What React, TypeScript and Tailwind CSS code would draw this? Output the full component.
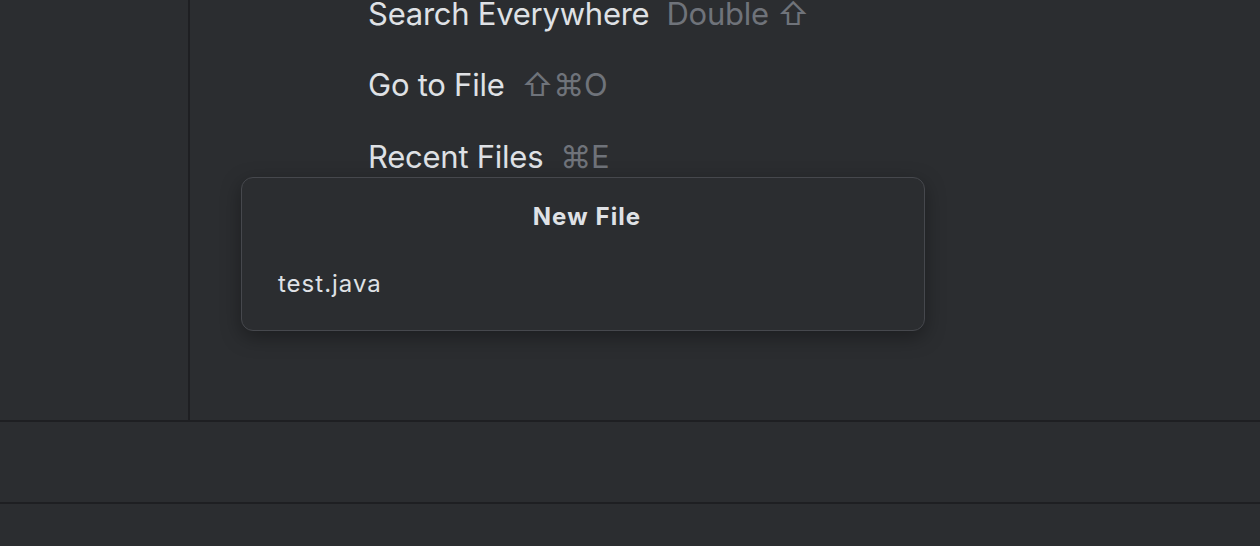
const rows = [
  { label: 'Search Everywhere', keys: 'Double ⇧' },
  { label: 'Go to File', keys: '⇧⌘O' },
  { label: 'Recent Files', keys: '⌘E' },
];

export default function App() {
  return (
    <div className="flex h-[546px] w-[1260px] flex-col overflow-hidden bg-[#2b2d30] font-['Inter','Noto_Sans',sans-serif] text-[#dfe1e5]">
      <div className="flex h-[420px]">
        <div className="w-[190px] shrink-0 border-r-2 border-[#1e1f22]" />
        <div className="relative flex-1">
          <div className="-mt-[22px] flex flex-col pl-[178px]">
            {rows.map((r) => (
              <div key={r.label} className="flex h-[71.5px] items-center gap-[17px] text-[31px] tracking-[-0.25px]">
                <span>{r.label}</span>
                <span className="text-[#6f737a]">{r.keys}</span>
              </div>
            ))}
          </div>
          <div className="absolute left-[51px] top-[177px] flex h-[154px] w-[684px] flex-col rounded-[12px] border border-[#46484d] bg-[#2b2d30] shadow-[0_6px_20px_rgba(0,0,0,0.35)]">
            <div className="pl-[8px] pt-[21px] text-center text-[24px] font-bold tracking-[1.1px]">New File</div>
            <div className="pl-[36px] pt-[31px] text-[24px] tracking-[1px]">test.java</div>
          </div>
        </div>
      </div>
      <div className="h-[84px] border-y-2 border-[#1e1f22]" />
      <div className="flex-1" />
    </div>
  );
}
